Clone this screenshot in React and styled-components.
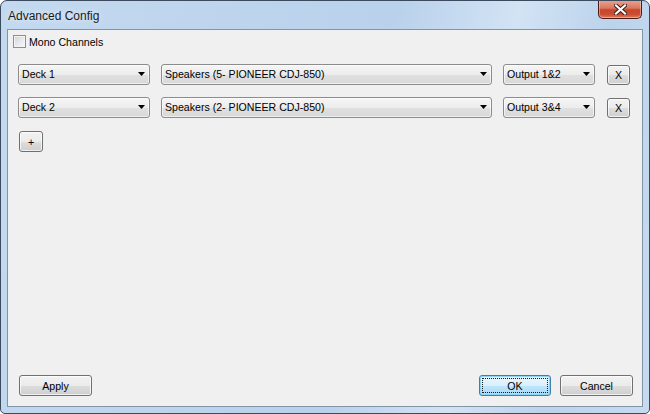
import React from 'react';
import styled, { createGlobalStyle, css } from 'styled-components';

const GlobalStyle = createGlobalStyle`
  html, body {
    margin: 0;
    padding: 0;
    background: #ffffff;
  }
  body {
    font-family: "Liberation Sans", Arial, sans-serif;
    font-size: 10.6px;
    color: #000;
  }
`;

const Window = styled.div`
  width: 650px;
  height: 414px;
  box-sizing: border-box;
  border: 1px solid #3b4b5d;
  border-radius: 7px 7px 5px 5px;
  background: linear-gradient(100deg, #c3d9ef 0%, #b9d1eb 55%, #d2e3f4 72%, #bcd3ec 85%, #c6dbf0 100%);
  display: flex;
  flex-direction: column;
  overflow: hidden;
`;

const TitleBar = styled.div`
  height: 28px;
  display: flex;
  justify-content: space-between;
  align-items: flex-start;
  flex-shrink: 0;
`;

const Title = styled.span`
  font-family: "Liberation Sans", Arial, sans-serif;
  font-size: 12px;
  color: #1b1b1b;
  padding: 8px 0 0 7px;
  text-shadow: 0 0 6px rgba(255, 255, 255, 0.9);
`;

const CloseButton = styled.div`
  width: 44px;
  height: 19px;
  margin: -1px 7px 0 0;
  box-sizing: border-box;
  border: 1px solid #4c1d16;
  border-top: none;
  border-radius: 0 0 5px 5px;
  background: linear-gradient(#e8a592 0%, #da7760 45%, #c6452c 55%, #cc4c31 80%, #e07d60 100%);
  box-shadow: inset 0 0 0 1px rgba(255, 220, 210, 0.45);
  display: flex;
  align-items: center;
  justify-content: center;
`;

const Client = styled.div`
  flex: 1;
  margin: 0 6px 6px 6px;
  border: 1px solid #8394a7;
  background: #f0f0f0;
  display: flex;
  flex-direction: column;
  padding: 5px 9px 10px 10px;
`;

const CheckRow = styled.label`
  display: flex;
  align-items: center;
  gap: 3px;
  margin-left: -5px;
  height: 13px;
`;

const CheckBox = styled.span`
  width: 13px;
  height: 13px;
  box-sizing: border-box;
  border: 1px solid #8e8f8f;
  background: linear-gradient(135deg, #d0d2d5 0%, #e6e7e8 50%, #fafafa 100%);
  box-shadow: inset 0 0 0 1px #f3f3f3;
`;

const DeviceList = styled.div`
  display: flex;
  flex-direction: column;
  gap: 11px;
  margin-top: 15px;
`;

const DeviceRow = styled.div`
  display: flex;
  align-items: center;
`;

const Combo = styled.div`
  width: ${p => p.$width}px;
  margin-right: ${p => p.$gap}px;
  flex-shrink: 0;
  height: 21px;
  box-sizing: border-box;
  border: 1px solid #8c8c8c;
  border-radius: 3px;
  background: linear-gradient(#f6f6f6 0%, #ececec 50%, #e0e0e0 52%, #d8d8d8 100%);
  box-shadow: inset 0 0 0 1px rgba(255, 255, 255, 0.6);
  display: flex;
  align-items: center;
  justify-content: space-between;
  padding: 0 4px 0 3px;
  white-space: nowrap;
`;

const buttonFace = css`
  box-sizing: border-box;
  border: 1px solid #707070;
  border-radius: 3px;
  background: linear-gradient(#f2f2f2 0%, #ebebeb 50%, #dddddd 52%, #cfcfcf 100%);
  box-shadow: inset 0 0 0 1px rgba(255, 255, 255, 0.7);
  display: flex;
  align-items: center;
  justify-content: center;
  font-family: "Liberation Sans", Arial, sans-serif;
  font-size: 10.6px;
  color: #000;
  padding: 0;
  flex-shrink: 0;
`;

const SmallButton = styled.button`
  ${buttonFace}
  width: ${p => p.$width}px;
  height: ${p => p.$height}px;
  margin-top: ${p => p.$top || 0}px;
  margin-left: ${p => p.$left || 0}px;
`;

const Footer = styled.div`
  margin-top: auto;
  display: flex;
  align-items: center;
  padding-left: 1px;
`;

const Spacer = styled.div`
  flex: 1;
`;

const DialogButton = styled.button`
  ${buttonFace}
  width: ${p => p.$width || 73}px;
  height: 21px;
  margin-left: ${p => p.$gap || 0}px;
  position: relative;

  ${p => p.$default && css`
    border-color: #3c7fb1;
    background: linear-gradient(#eaf6fd 0%, #d9f0fc 50%, #bee6fd 52%, #a7d9f5 100%);
    box-shadow: inset 0 0 0 1px #8fd4f6;
    &::after {
      content: '';
      position: absolute;
      inset: 2px;
      border: 1px dotted #1a1a1a;
    }
  `}
`;

const Arrow = () => (
  <svg width="7" height="4" viewBox="0 0 7 4">
    <path d="M0 0 H7 L3.5 4 Z" fill="#000" />
  </svg>
);

const CloseGlyph = () => (
  <svg width="13" height="11" viewBox="0 0 13 11">
    <path d="M2 1.5 L11 9.5 M11 1.5 L2 9.5" stroke="#3a1a14" strokeWidth="4" strokeLinecap="square" />
    <path d="M2 1.5 L11 9.5 M11 1.5 L2 9.5" stroke="#ffffff" strokeWidth="2.2" strokeLinecap="square" />
  </svg>
);

const devices = [
  { deck: 'Deck 1', device: 'Speakers (5- PIONEER CDJ-850)', output: 'Output 1&2' },
  { deck: 'Deck 2', device: 'Speakers (2- PIONEER CDJ-850)', output: 'Output 3&4' }
];

function ComboBox({ value, width, gap }) {
  return (
    <Combo $width={width} $gap={gap}>
      <span>{value}</span>
      <Arrow />
    </Combo>
  );
}

export default function App() {
  return (
    <>
      <GlobalStyle />
      <Window>
        <TitleBar>
          <Title>Advanced Config</Title>
          <CloseButton><CloseGlyph /></CloseButton>
        </TitleBar>
        <Client>
          <CheckRow>
            <CheckBox />
            <span>Mono Channels</span>
          </CheckRow>
          <DeviceList>
            {devices.map(d => (
              <DeviceRow key={d.deck}>
                <ComboBox value={d.deck} width={132} gap={11} />
                <ComboBox value={d.device} width={331} gap={11} />
                <ComboBox value={d.output} width={92} gap={12} />
                <SmallButton $width={23} $height={20} $top={2}>X</SmallButton>
              </DeviceRow>
            ))}
          </DeviceList>
          <SmallButton $width={24} $height={21} $top={13} $left={1}>+</SmallButton>
          <Footer>
            <DialogButton>Apply</DialogButton>
            <Spacer />
            <DialogButton $default $width={72}>OK</DialogButton>
            <DialogButton $gap={9}>Cancel</DialogButton>
          </Footer>
        </Client>
      </Window>
    </>
  );
}
